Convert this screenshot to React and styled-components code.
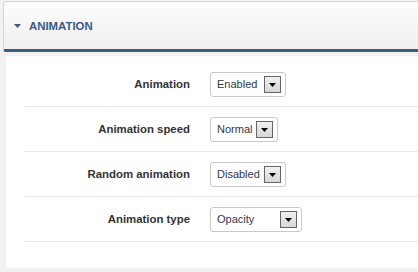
import React from 'react'
import styled, { createGlobalStyle } from 'styled-components'

const GlobalStyle = createGlobalStyle`
  body {
    margin: 0;
    background: #f1f1f1;
    font-family: "Liberation Sans", Arial, sans-serif;
  }
`

const rows = [
   { label: 'Animation', value: 'Enabled', width: 76 },
   { label: 'Animation speed', value: 'Normal', width: 68 },
   { label: 'Random animation', value: 'Disabled', width: 76 },
   { label: 'Animation type', value: 'Opacity', width: 92 },
]

function DropSelect({ value, width }) {
   return (
      <SelectBox $width={width}>
         <SelectText>{value}</SelectText>
         <DropButton>
            <svg width="7" height="4" viewBox="0 0 7 4">
               <path d="M0 0h7L3.5 4z" fill="#000" />
            </svg>
         </DropButton>
      </SelectBox>
   )
}

export default function App() {
   return (
      <Page>
         <GlobalStyle />
         <Header>
            <svg width="7" height="4" viewBox="0 0 7 4">
               <path d="M0 0h7L3.5 4z" fill="#3e5b7b" />
            </svg>
            <Title>ANIMATION</Title>
         </Header>
         <Body>
            {rows.map((row) => (
               <Row key={row.label}>
                  <Label>{row.label}</Label>
                  <div>
                     <DropSelect value={row.value} width={row.width} />
                  </div>
               </Row>
            ))}
         </Body>
      </Page>
   )
}

const Page = styled.div`
  width: 418px;
  height: 272px;
  overflow: hidden;
  padding: 1px 0 0 3px;
  box-sizing: border-box;
`

const Header = styled.div`
  height: 47px;
  display: flex;
  align-items: center;
  gap: 8px;
  padding-left: 10px;
  border: 1px solid #d6d6d6;
  border-right: none;
  border-bottom: 3px solid #3e5b7b;
  border-radius: 3px 0 0 3px;
  background: linear-gradient(#fdfdfd, #efefef);
`

const Title = styled.span`
  font-size: 11.4px;
  font-weight: bold;
  color: #3b5b82;
`

const Body = styled.div`
  margin: 4px 0 0 3px;
  height: 212px;
  box-sizing: border-box;
  padding: 6px 0 0 19px;
  background: #fff;
  border-radius: 3px 0 0 3px;
`

const Row = styled.div`
  display: grid;
  grid-template-columns: 165px 1fr;
  column-gap: 20px;
  align-items: center;
  height: 44px;
  border-bottom: 1px solid #e8e8e8;
`

const Label = styled.span`
  text-align: right;
  font-size: 11.4px;
  font-weight: bold;
  color: #333;
`

const SelectBox = styled.div`
  width: ${(p) => p.$width}px;
  height: 25px;
  box-sizing: border-box;
  display: flex;
  align-items: center;
  padding: 0 4px 0 6px;
  border: 1px solid #c9c9c9;
  border-radius: 3px;
  background: #fff;
`

const SelectText = styled.span`
  flex: 1;
  font-size: 11px;
  color: #34374a;
`

const DropButton = styled.span`
  width: 17px;
  height: 17px;
  box-sizing: border-box;
  display: flex;
  align-items: center;
  justify-content: center;
  padding-top: 2px;
  border: 1px solid #666;
  background: linear-gradient(#f0f0f0, #d6d6d6);
`
